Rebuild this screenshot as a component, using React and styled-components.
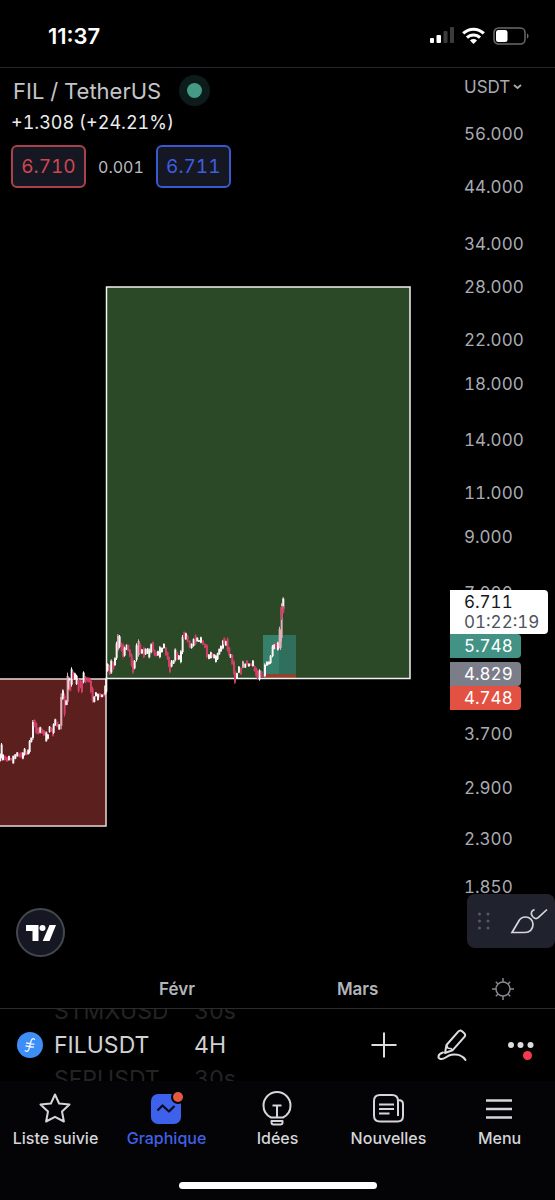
import React from 'react';
import styled, { createGlobalStyle } from 'styled-components';

const GlobalStyle = createGlobalStyle`
  * {
    box-sizing: border-box;
  }

  body {
    margin: 0;
    background: #000;
    color: #d1d4dc;
    font-family: Inter, 'Liberation Sans', sans-serif;
    font-variant-numeric: tabular-nums;
  }

  button {
    padding: 0;
    border: 0;
    background: none;
    color: inherit;
    font: inherit;
    font-variant-numeric: tabular-nums;
    cursor: pointer;
  }

  svg {
    display: block;
  }
`;

const Page = styled.div`
  display: flex;
  flex-direction: column;
  min-height: 100vh;
`;

const StatusBar = styled.header`
  display: flex;
  align-items: center;
  justify-content: space-between;
  height: 68px;
  padding: 4px 26px 0 48px;
  border-bottom: 1px solid #24262d;
  color: #fff;
`;

const Clock = styled.time`
  font-size: 22px;
  font-weight: 600;
  font-variant-numeric: normal;
`;

const StatusIcons = styled.div`
  display: flex;
  align-items: center;
  gap: 8px;
`;

const Chart = styled.main`
  position: relative;
  display: grid;
  grid-template-columns: minmax(0, 1fr) 105px;
  flex: 1;
`;

const Plot = styled.svg`
  width: 100%;
  height: 902px;
`;

const Legend = styled.section`
  position: absolute;
  top: 7px;
  left: 11px;
`;

const TitleRow = styled.div`
  display: flex;
  align-items: center;
  gap: 18px;
  height: 31px;
`;

const Title = styled.h1`
  margin: 0 0 0 2px;
  font-size: 22px;
  font-weight: 400;
  color: #c4c5ca;
`;

const MarketOpen = styled.span`
  display: grid;
  place-items: center;
  width: 31px;
  height: 31px;
  border-radius: 50%;
  background: #0d1c1b;

  &::before {
    content: '';
    width: 15px;
    height: 15px;
    border-radius: 50%;
    background: #459a87;
  }
`;

const Change = styled.p`
  margin: 5px 0 10px;
  font-size: 18px;
  line-height: 24px;
  color: #ececee;
`;

const QuoteRow = styled.div`
  display: flex;
  align-items: center;
  gap: 12px;
`;

const Quote = styled.button`
  && {
    width: 75px;
    height: 43px;
    border: 2px solid ${(p) => (p.$side === 'sell' ? '#a8434b' : '#3a58d0')};
    border-radius: 6px;
    background: #151722;
    color: ${(p) => (p.$side === 'sell' ? '#cf4651' : '#3f5de0')};
    font-size: 19px;
  }
`;

const Spread = styled.span`
  font-size: 16px;
  color: #b9bbc0;
`;

const PriceScale = styled.aside`
  position: relative;
  padding: 9px 0 0 14px;
  font-size: 17px;
  line-height: 20px;
  color: #a9abb1;
`;

const Currency = styled.button`
  && {
    display: flex;
    align-items: center;
    gap: 3px;
    margin-bottom: 27px;
    font-size: 17px;
    line-height: 20px;
  }
`;

const Ticks = styled.ol`
  margin: 0;
  padding: 0;
  list-style: none;
`;

const Tags = styled.div`
  position: absolute;
  top: 522px;
  left: 0;
  display: flex;
  flex-direction: column;
  align-items: flex-start;
`;

const Tag = styled.div`
  width: 71px;
  margin-top: ${(p) => p.$gap || 0}px;
  padding: 2px 0 2px 14px;
  border-radius: 0 4px 4px 0;
  background: ${(p) => p.$color};
  color: #fff;
`;

const LastPrice = styled(Tag)`
  width: 98px;
  color: #131722;

  span {
    display: block;
    color: #50535e;
  }
`;

const Logo = styled.a`
  position: absolute;
  left: 16px;
  bottom: 13px;
  display: grid;
  place-items: center;
  width: 49px;
  height: 49px;
  border: 2px solid #45474e;
  border-radius: 50%;
  background: #151722;
`;

const DrawingTools = styled.div`
  position: absolute;
  right: 0;
  bottom: 22px;
  display: flex;
  align-items: center;
  justify-content: space-between;
  width: 88px;
  height: 54px;
  padding: 0 7px 0 10px;
  border-radius: 8px;
  background: #20222d;
`;

const TimeScale = styled.div`
  display: grid;
  grid-template-columns: minmax(0, 1fr) 105px;
  align-items: center;
  height: 39px;
  border-bottom: 1px solid #2c2c2f;
`;

const Months = styled.div`
  display: flex;
  gap: 142px;
  padding-left: 159px;
  font-size: 17px;
  font-weight: 600;
  color: #b3b5ba;
`;

const ScaleSettings = styled.button`
  justify-self: center;
`;

const SymbolBar = styled.section`
  display: flex;
  align-items: center;
  height: 72px;
  padding: 0 21px 0 17px;
  overflow: hidden;
`;

const Wheel = styled.div`
  width: ${(p) => p.$width}px;
  margin-left: ${(p) => p.$indent}px;
  overflow: hidden;
  font-size: 23px;
  line-height: 32px;
  color: #d0d1d4;
  white-space: nowrap;
`;

const Faded = styled.div`
  line-height: 36px;
  color: #242424;
`;

const Actions = styled.div`
  display: flex;
  align-items: center;
  gap: 39px;
  margin-left: auto;
`;

const MoreButton = styled.button`
  position: relative;

  &::after {
    content: '';
    position: absolute;
    right: 2px;
    bottom: -4px;
    width: 9px;
    height: 9px;
    border-radius: 50%;
    background: #f7394b;
  }
`;

const TabBar = styled.nav`
  display: grid;
  grid-template-columns: repeat(5, 1fr);
  align-content: start;
  height: 119px;
  padding-top: 9px;
  background: #040406;
  position: relative;

  &::after {
    content: '';
    position: absolute;
    left: 50%;
    bottom: 11px;
    width: 198px;
    height: 7px;
    margin-left: -99px;
    border-radius: 4px;
    background: #fff;
  }
`;

const Tab = styled.a`
  display: flex;
  flex-direction: column;
  align-items: center;
  gap: 2px;
  color: ${(p) => (p.$active ? '#4060e6' : '#d5d6d9')};
  font-size: 16px;
  font-weight: 500;
  line-height: 20px;
  text-decoration: none;
  white-space: nowrap;
`;

// Pixels per unit of ln(price)
const LOG_STEP = 221;

const prices = [56, 44, 34, 28, 22, 18, 14, 11, 9, 7, 3.7, 2.9, 2.3, 1.85];

const ticks = prices.map((price, i) => ({
  label: price.toFixed(3),
  height: Math.round(LOG_STEP * Math.log(price / (prices[i + 1] || 1.5))),
}));

// x, high, low, direction (u up, d down, m mixed)
const january = `0 490 515 u,4 459 505 u,8 492 512 u,14 496 512 d,20 500 516 d,26 497 512 u,32 503 512 d,39 496 522 u,
45 492 508 u,51 486 500 u,57 490 502 d,63 486 504 d,68 486 508 u,73 474 497 u,79 484 496 d,84 478 494 u,88 450 490 u,
93 442 458 u,98 390 450 u,103 388 412 d,108 396 432 d,114 412 434 d,120 410 430 u,126 416 432 d,131 420 438 d,
138 424 456 u,143 432 448 u,148 408 428 u,153 412 426 d,158 415 440 d,160 400 432 u,165 386 408 u,171 394 412 d,
177 402 420 u,183 310 418 m,188 298 330 u,193 310 380 d,198 330 346 u,202 248 345 m,207 262 300 u,210 270 305 d,
214 232 290 u,219 244 270 d,224 248 270 u,229 254 285 u,235 265 308 d,241 270 295 d,245 272 310 d,250 244 280 u,
256 258 280 d,262 262 275 d,267 262 278 d,272 268 310 d,277 290 338 d,282 318 338 u,287 306 320 u,293 310 332 u,
299 309 322 d,305 313 322 u,311 310 320 d,315 285 315 u,318 262 310 u`;

const february = `22 250 275 u,28 255 285 d,33 238 282 u,39 245 270 d,44 232 258 u,49 185 240 u,53 162 215 m,58 165 205 u,
64 188 215 d,69 190 235 d,73 200 230 u,79 193 210 u,84 193 215 d,89 207 232 d,94 220 260 d,98 235 282 d,103 240 268 u,
109 190 245 u,115 178 230 m,120 190 222 d,125 207 222 u,131 200 235 d,136 205 225 u,142 204 222 u,147 205 235 u,
153 190 220 u,158 184 215 d,163 208 228 d,168 215 230 d,173 212 228 u,179 198 235 u,185 202 218 u,191 190 206 u,
197 200 228 d,202 215 240 d,206 228 262 d,209 245 280 d,214 240 262 u,220 240 252 u,225 205 245 u,231 215 240 d,
236 225 240 u,242 210 250 u,247 165 222 u,252 154 178 d,257 158 180 u,262 165 188 d,268 180 205 d,274 190 206 u,
280 175 200 u,286 163 195 d,291 172 185 u,296 180 186 u,302 170 190 u,308 180 195 d,314 190 205 d,320 192 235 d,
326 222 238 u,332 215 236 u,337 220 232 d,342 222 236 u,347 225 248 u,352 218 240 u,357 205 225 u,362 196 216 u,
368 180 208 u,372 172 195 d,377 182 198 u,382 172 215 d,387 200 228 d,391 222 234 u,396 222 255 d,401 240 285 d,
404 270 312 d,410 278 296 u,416 258 280 u,422 262 285 d,428 242 265 m,435 250 264 u,440 240 258 d,446 250 260 u,
452 250 258 d,458 240 260 u,463 256 275 d,468 262 290 d,472 270 298 d,478 268 302 u,484 272 290 d,489 285 292 d,
494 250 292 u,500 244 258 u,506 244 254 u,511 225 252 u,517 195 232 u,522 192 208 u,527 188 205 d,533 185 212 u,
538 140 205 m,541 150 210 m,544 70 185 m,544 78 120 d,549 52 90 u,549 78 100 d`;

const candleColors = { u: '#fbf4f4', d: '#d33f68', m: '#e0b0ba' };

const Candles = ({ data, x, y }) => (
  <g transform={`translate(${x} ${y}) scale(0.3333)`}>
    {data.split(',').map((item, i) => {
      const [cx, high, low, dir] = item.trim().split(' ');
      const top = Number(high);
      const height = Number(low) - top;
      return (
        <g key={i} fill={candleColors[dir]}>
          <rect x={cx - 1} y={top} width="3" height={height} />
          <rect x={cx - 2} y={top + height * 0.1} width="6" height={height * 0.8} />
        </g>
      );
    })}
  </g>
);

const ChartPlot = () => (
  <Plot viewBox="0 68 450 902" preserveAspectRatio="none" role="img" aria-label="FIL / TetherUS">
    <rect x="-4" y="679" width="110" height="147" fill="#5b1f1e" stroke="#ead9d6" strokeWidth="1.5" />
    <rect x="106.5" y="287" width="303.5" height="391.5" fill="#2b4827" />
    <rect x="263" y="635" width="33" height="40" fill="#2f6f5c" />
    <rect x="263" y="635" width="16" height="40" fill="#36806b" />
    <rect x="265" y="674" width="31" height="4" fill="#93402c" />
    <rect x="106.5" y="287" width="303.5" height="391.5" fill="none" stroke="#f2f4f1" strokeWidth="1.5" />
    <Candles data={january} x={0} y={590} />
    <Candles data={february} x={100} y={580} />
  </Plot>
);

const SignalIcon = () => (
  <svg width="25" height="17" viewBox="0 0 25 17">
    <rect x="1" y="11" width="4" height="5" rx="1" fill="#fff" />
    <rect x="7.5" y="8" width="4.5" height="8" rx="1" fill="#fff" />
    <rect x="14.5" y="4" width="4" height="12" rx="1" fill="#3c3c3e" />
    <rect x="21" y="0" width="4" height="16" rx="1" fill="#3c3c3e" />
  </svg>
);

const WifiIcon = () => (
  <svg width="23" height="18" viewBox="0 0 23 18" fill="none" stroke="#fff" strokeWidth="3">
    <path d="M1.2 6.4a14.6 14.6 0 0 1 20.6 0" />
    <path d="M5 10.6a9.2 9.2 0 0 1 13 0" />
    <path d="M8 13.5a5 5 0 0 1 7 0L11.5 17Z" fill="#fff" stroke="none" />
  </svg>
);

const BatteryIcon = () => (
  <svg width="36" height="18" viewBox="0 0 36 18">
    <rect x="1" y="1" width="31" height="16" rx="4.5" fill="none" stroke="#69696b" strokeWidth="1.5" />
    <rect x="3" y="3" width="11.5" height="12" rx="2.5" fill="#fff" />
    <path d="M34 6.5c2 .6 2 4.4 0 5Z" fill="#69696b" />
  </svg>
);

const ChevronIcon = () => (
  <svg width="9" height="6" viewBox="0 0 9 6" fill="none" stroke="currentColor" strokeWidth="1.8">
    <path d="m1 1 3.5 3L8 1" />
  </svg>
);

const LogoMark = () => (
  <svg width="32" height="18" viewBox="0 0 32 18" fill="#fff">
    <path d="M1 1h12.5v16H7.5V7H1Z" />
    <circle cx="17.5" cy="4" r="3" />
    <path d="M24.5 1H31l-6.5 16h-6.8Z" />
  </svg>
);

const GripIcon = () => (
  <svg width="14" height="20" viewBox="0 0 14 20" fill="#565963">
    {[3, 10, 17].map((y) => (
      <React.Fragment key={y}>
        <circle cx="2.5" cy={y} r="1.5" />
        <circle cx="11" cy={y} r="1.5" />
      </React.Fragment>
    ))}
  </svg>
);

const BrushIcon = () => (
  <svg width="38" height="26" viewBox="0 0 38 26" fill="none" stroke="#d5d7df" strokeWidth="1.7">
    <path d="M2 24.5 8.500 13.500C10 10.500 12.500 9 15.500 9c4.300 0 7.500 3 7.500 7.500 0 4.800-3.500 8-8 8Z" />
    <path d="M24.500 1.500c-3 1.200-4 3.500-2.500 6.200 1.300 2.300 4 4 6.200 2L37 1.500" />
  </svg>
);

const GearIcon = () => (
  <svg width="22" height="22" viewBox="0 0 22 22" fill="none" stroke="#85878d" strokeWidth="1.5">
    <circle cx="11" cy="11" r="7" />
    <path d="M11 4V0M11 22v-4M4 11H0M22 11h-4M6 6 3.800 3.800M18.200 18.200 16 16M6 16l-2.200 2.200M18.200 3.800 16 6" />
  </svg>
);

const CoinIcon = () => (
  <svg width="26" height="26" viewBox="0 0 26 26" fill="none">
    <circle cx="13" cy="13" r="13" fill="#3e8ef7" />
    <path
      d="M17.500 7.500c-1-1.500-2.700-.8-3.300 1.300l-2.300 8.400c-.6 2-2 2.800-3.700 1.500M9.500 11l7.500 1.200M9 14l7.500 1.200"
      stroke="#e9f2ff"
      strokeWidth="1.3"
      strokeLinecap="round"
    />
  </svg>
);

const PlusIcon = () => (
  <svg width="26" height="26" viewBox="0 0 26 26" stroke="#dcdde0" strokeWidth="2">
    <path d="M13 .5v25M.5 13h25" />
  </svg>
);

const PencilIcon = () => (
  <svg width="32" height="34" viewBox="0 0 32 34" fill="none" stroke="#dcdde0" strokeWidth="2" strokeLinejoin="round">
    <path d="M10.500 17 22 3.800c1.500-1.700 2.800-1.700 4.300-.4l1.700 1.500c1.500 1.300 1.600 2.700.2 4.300L16.500 22.300 9 25Z" />
    <path d="m10.500 17 1.500 3.200 3 .3 1.500 1.800" strokeWidth="1.6" />
    <path d="M7 24.500c-5.500 1.500-5.500 5.500-2.500 6.500 4 1 6-3.500 11-4.300 6-1 11.500 1.300 14 5.300" strokeLinecap="round" />
  </svg>
);

const DotsIcon = () => (
  <svg width="27" height="22" viewBox="0 0 27 22" fill="#dcdde0">
    <circle cx="4" cy="11" r="3" />
    <circle cx="13.5" cy="11" r="3" />
    <circle cx="23.5" cy="11" r="3" />
  </svg>
);

const TabIcon = (props) => (
  <svg
    width="36"
    height="36"
    viewBox="1 0 36 36"
    fill="none"
    stroke="currentColor"
    strokeWidth="2"
    strokeLinejoin="round"
    {...props}
  />
);

const StarIcon = () => (
  <TabIcon>
    <path d="m18 4.500 4.100 9 10.400 1-7.500 7 1.900 10L18 26.800 9.100 31.500l1.900-10-7.500-7 10.400-1Z" />
  </TabIcon>
);

const GraphIcon = () => (
  <TabIcon>
    <rect x="3" y="4" width="30" height="30" rx="7" fill="#3e61ec" stroke="none" />
    <path d="m9.500 20.500 5-5 6.500 6 5.500-5.500" stroke="#080b1c" strokeWidth="2.2" />
    <circle cx="30" cy="7" r="7" fill="#040406" stroke="none" />
    <circle cx="30" cy="7" r="5" fill="#e4593f" stroke="none" />
  </TabIcon>
);

const BulbIcon = () => (
  <TabIcon>
    <path d="M12 27.500C7 25 4.500 20.500 4.500 15.500a13.500 13.500 0 0 1 27 0c0 5-2.500 9.500-7.500 12Z" />
    <path d="M12.500 31h11v1.500q0 2-2 2h-7q-2 0-2-2Z" />
    <path d="M13.500 15.500h9M18 15.500v12" />
  </TabIcon>
);

const NewsIcon = () => (
  <TabIcon>
    <path d="M28 26V11c0-4-2-6-6-6H10c-4 0-6 2-6 6v14.500c0 4 2 6 6 6h17.500c3.500 0 5.500-2 5.500-5.500V14c0-2.500-2-4-5-4" />
    <path d="M9 14.500h15M9 19h15M9 23.500h10.500" />
  </TabIcon>
);

const MenuIcon = () => (
  <TabIcon strokeWidth="2.6">
    <path d="M5 10.500h26M5 19h26M5 27.500h26" />
  </TabIcon>
);

const tabs = [
  { label: 'Liste suivie', Icon: StarIcon },
  { label: 'Graphique', Icon: GraphIcon, active: true },
  { label: 'Idées', Icon: BulbIcon },
  { label: 'Nouvelles', Icon: NewsIcon },
  { label: 'Menu', Icon: MenuIcon },
];

const App = () => {
  return (
    <Page>
      <GlobalStyle />
      <StatusBar>
        <Clock>11:37</Clock>
        <StatusIcons>
          <SignalIcon />
          <WifiIcon />
          <BatteryIcon />
        </StatusIcons>
      </StatusBar>

      <Chart>
        <ChartPlot />
        <PriceScale>
          <Currency type="button">
            USDT
            <ChevronIcon />
          </Currency>
          <Ticks>
            {ticks.map((tick) => (
              <li key={tick.label} style={{ height: tick.height }}>
                {tick.label}
              </li>
            ))}
          </Ticks>
          <Tags>
            <LastPrice $color="#fff">
              6.711
              <span>01:22:19</span>
            </LastPrice>
            <Tag $color="#429385">5.748</Tag>
            <Tag $color="#7b7d89" $gap={4}>4.829</Tag>
            <Tag $color="#e25141">4.748</Tag>
          </Tags>
        </PriceScale>

        <Legend>
          <TitleRow>
            <Title>FIL / TetherUS</Title>
            <MarketOpen />
          </TitleRow>
          <Change>+1.308 (+24.21%)</Change>
          <QuoteRow>
            <Quote type="button" $side="sell">6.710</Quote>
            <Spread>0.001</Spread>
            <Quote type="button" $side="buy">6.711</Quote>
          </QuoteRow>
        </Legend>

        <Logo href="#" aria-label="TradingView">
          <LogoMark />
        </Logo>
        <DrawingTools>
          <GripIcon />
          <button type="button" aria-label="Pinceau">
            <BrushIcon />
          </button>
        </DrawingTools>
      </Chart>

      <TimeScale>
        <Months>
          <span>Févr</span>
          <span>Mars</span>
        </Months>
        <ScaleSettings type="button" aria-label="Paramètres">
          <GearIcon />
        </ScaleSettings>
      </TimeScale>

      <SymbolBar>
        <CoinIcon />
        <Wheel $width={113} $indent={11}>
          <Faded>STMXUSDT</Faded>
          FILUSDT
          <Faded>SFPUSDT</Faded>
        </Wheel>
        <Wheel $width={50} $indent={27}>
          <Faded>30s</Faded>
          4H
          <Faded>30s</Faded>
        </Wheel>
        <Actions>
          <button type="button" aria-label="Ajouter">
            <PlusIcon />
          </button>
          <button type="button" aria-label="Dessiner">
            <PencilIcon />
          </button>
          <MoreButton type="button" aria-label="Plus">
            <DotsIcon />
          </MoreButton>
        </Actions>
      </SymbolBar>

      <TabBar>
        {tabs.map(({ label, Icon, active }) => (
          <Tab key={label} href="#" $active={active}>
            <Icon />
            {label}
          </Tab>
        ))}
      </TabBar>
    </Page>
  );
};

export default App;
